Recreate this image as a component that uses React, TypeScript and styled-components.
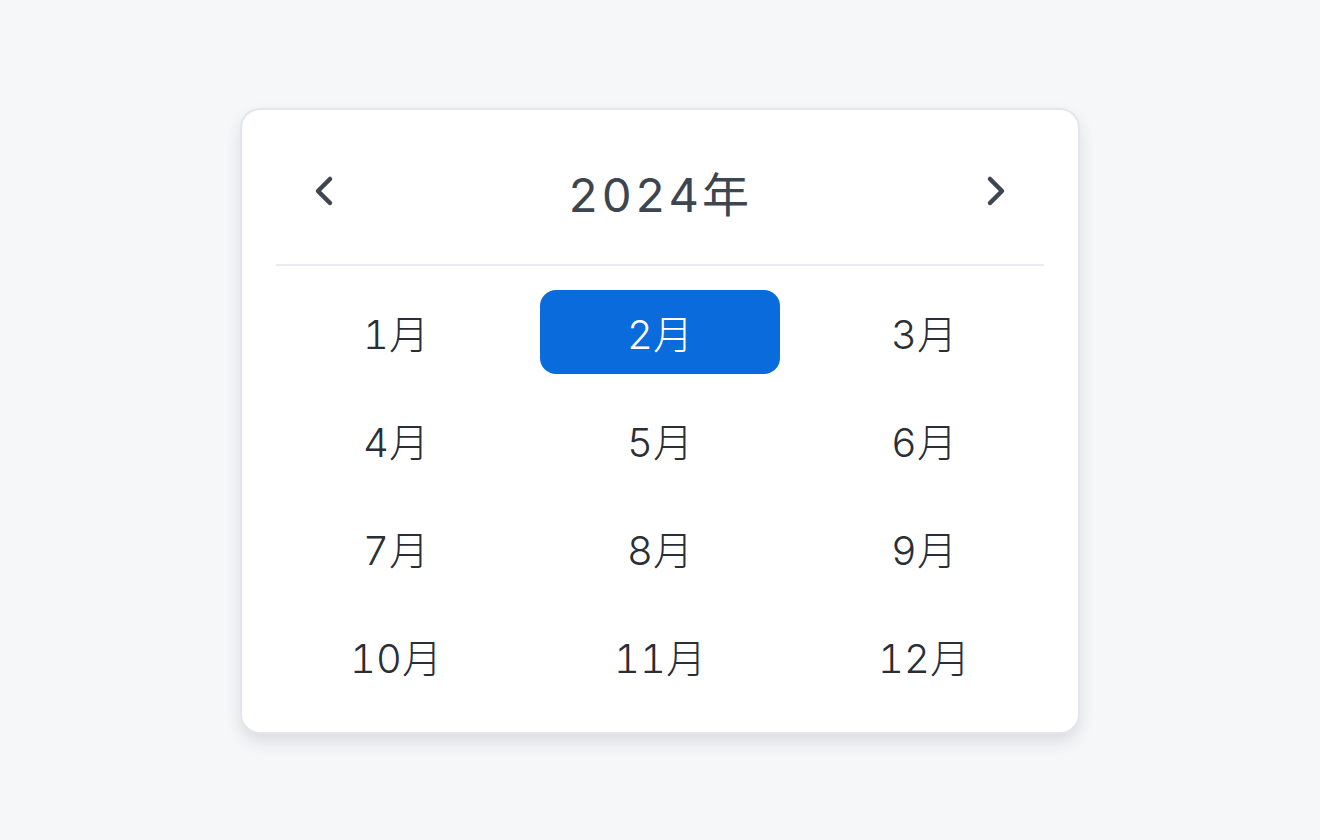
import { useState } from 'react'
import styled, { createGlobalStyle } from 'styled-components'
import { ChevronLeft, ChevronRight } from 'lucide-react'

const MONTHS = Array.from({ length: 12 }, (_, i) => i + 1)

const App = () => {
  const [year, setYear] = useState(2024)
  const [activeMonth, setActiveMonth] = useState(2)

  return (
    <>
      <GlobalStyle />
      <PageContainer>
        <Card>
          <Header>
            <NavButton aria-label='前年' onClick={() => setYear(year - 1)}>
              <ChevronLeft size={48} strokeWidth={2.25} />
            </NavButton>
            <YearTitle>{year}年</YearTitle>
            <NavButton aria-label='翌年' onClick={() => setYear(year + 1)}>
              <ChevronRight size={48} strokeWidth={2.25} />
            </NavButton>
          </Header>

          <Divider />

          <MonthGrid>
            {MONTHS.map((month) => (
              <MonthCell
                key={month}
                $active={activeMonth === month}
                onClick={() => setActiveMonth(month)}
              >
                {month}月
              </MonthCell>
            ))}
          </MonthGrid>
        </Card>
      </PageContainer>
    </>
  )
}

const GlobalStyle = createGlobalStyle`
  html, body {
    margin: 0;
    padding: 0;
    background: #f6f7f9;
  }

  body {
    font-family: Inter, 'Noto Sans CJK JP', sans-serif;
    font-variant-numeric: tabular-nums;
  }
`

const PageContainer = styled.main`
  box-sizing: border-box;
  width: 100vw;
  height: 100vh;
  padding-top: 2px;
  display: flex;
  justify-content: center;
  align-items: center;
  background: #f6f7f9;
`

const Card = styled.div`
  width: 768px;
  padding: 34px;
  background: #ffffff;
  border: 2px solid #e3e6eb;
  border-radius: 20px;
  box-shadow: 0 8px 16px rgba(30, 40, 60, 0.12);
`

const Header = styled.div`
  height: 94px;
  padding: 0 24px;
  display: flex;
  align-items: center;
  justify-content: space-between;
`

const NavButton = styled.button`
  width: 48px;
  height: 48px;
  padding: 0;
  border: none;
  background: transparent;
  color: #3d4651;
  display: flex;
  align-items: center;
  justify-content: center;
  cursor: pointer;
`

const YearTitle = styled.h2`
  margin: 0;
  font-family: inherit;
  font-size: 47px;
  font-weight: 400;
  letter-spacing: 3px;
  color: #3c4550;
`

const Divider = styled.hr`
  margin: 26px 0 24px;
  height: 2px;
  border: none;
  background: #e8ebef;
`

const MonthGrid = styled.div`
  display: grid;
  grid-template-columns: repeat(3, 240px);
  grid-auto-rows: 84px;
  gap: 24px;
`

const MonthCell = styled.button<{ $active: boolean }>`
  border: none;
  border-radius: 16px;
  padding: 0;
  font-family: inherit;
  font-variant-numeric: tabular-nums;
  font-size: 40px;
  font-weight: 300;
  letter-spacing: 0;
  background: ${({ $active }) => ($active ? '#0a6bdc' : 'transparent')};
  color: ${({ $active }) => ($active ? '#ffffff' : '#2a2e35')};
  cursor: pointer;
`

export default App
